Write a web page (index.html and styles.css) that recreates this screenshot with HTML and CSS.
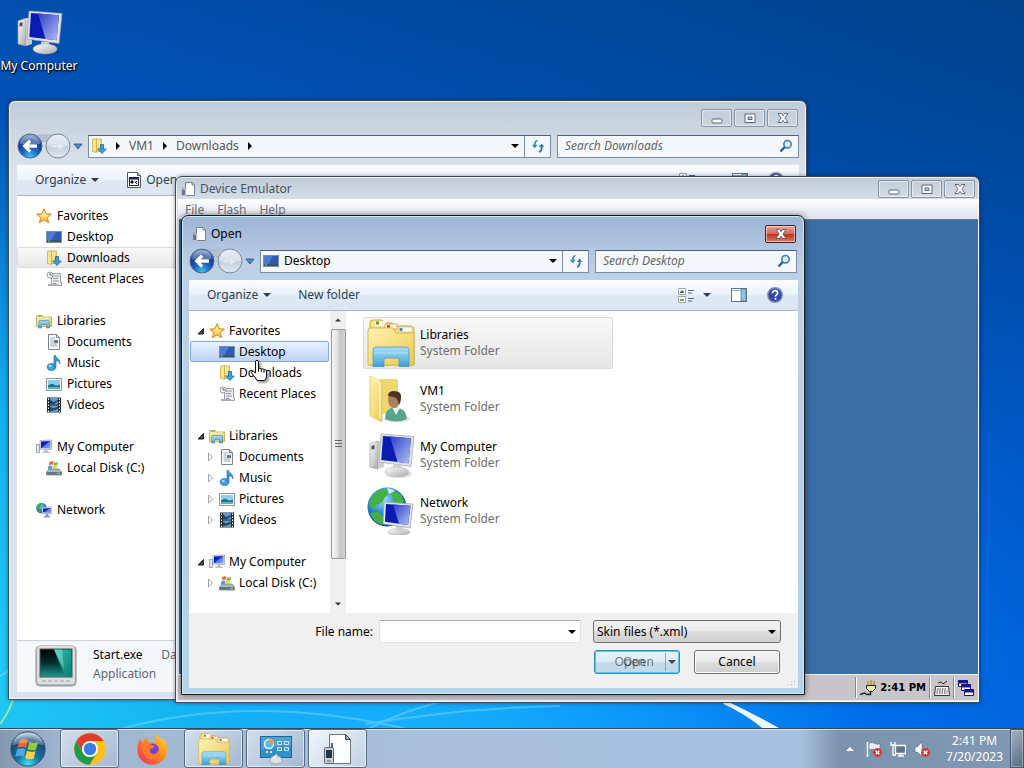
FILE: index.html
```html
<!DOCTYPE html>
<html lang="en">
<head>
    <meta charset="UTF-8">
    <meta name="viewport" content="width=device-width, initial-scale=1.0">
    <title>Desktop</title>
    <link rel="stylesheet" href="styles.css">
</head>
<body>
    <!-- icon sprite -->
    <svg class="sprite" aria-hidden="true">
        <defs>
            <linearGradient id="gScreen" x1="0" y1="0" x2="1" y2="1">
                <stop offset="0" stop-color="#0516a8"/><stop offset=".45" stop-color="#0a24c8"/><stop offset=".5" stop-color="#5a78e4"/><stop offset="1" stop-color="#8aa4f4"/>
            </linearGradient>
            <linearGradient id="gPanel" x1="0" y1="0" x2="1" y2="1">
                <stop offset="0" stop-color="#2a3fc8"/><stop offset="1" stop-color="#b4bff4"/>
            </linearGradient>
            <linearGradient id="gFolder" x1="0" y1="0" x2="1" y2="1">
                <stop offset="0" stop-color="#fdf3b4"/><stop offset="1" stop-color="#ecca50"/>
            </linearGradient>
            <linearGradient id="gGlass" x1="0" y1="0" x2="0" y2="1">
                <stop offset="0" stop-color="#a9ddf3"/><stop offset=".6" stop-color="#6dbbe2"/><stop offset="1" stop-color="#3a9ad4"/>
            </linearGradient>
            <linearGradient id="gGrey" x1="0" y1="0" x2="1" y2="1">
                <stop offset="0" stop-color="#ffffff"/><stop offset="1" stop-color="#a9a9ad"/>
            </linearGradient>
            <linearGradient id="gTeal" x1="0" y1="0" x2="0" y2="1">
                <stop offset="0" stop-color="#000"/><stop offset=".5" stop-color="#04302f"/><stop offset="1" stop-color="#1c9a90"/>
            </linearGradient>
            <linearGradient id="gBeam" x1="0" y1="0" x2="1" y2="1">
                <stop offset="0" stop-color="#2cc4a8"/><stop offset="1" stop-color="#0c7a78"/>
            </linearGradient>
            <radialGradient id="gStar" cx=".5" cy=".4" r=".6">
                <stop offset="0" stop-color="#fff3a0"/><stop offset="1" stop-color="#f9a51e"/>
            </radialGradient>
            <radialGradient id="gBack" cx=".5" cy=".95" r=".9">
                <stop offset="0" stop-color="#3fc4f4"/><stop offset=".4" stop-color="#1b62c0"/><stop offset=".75" stop-color="#143a8e"/><stop offset="1" stop-color="#8aa4d4"/>
            </radialGradient>
            <linearGradient id="gFwd" x1="0" y1="0" x2="0" y2="1">
                <stop offset="0" stop-color="#e9eef5"/><stop offset=".48" stop-color="#d9e1eb"/><stop offset=".52" stop-color="#c2cedb"/><stop offset="1" stop-color="#e3eaf2"/>
            </linearGradient>
            <radialGradient id="gGlobe" cx=".4" cy=".3" r=".7">
                <stop offset="0" stop-color="#a4e0f8"/><stop offset=".5" stop-color="#2f8cd0"/><stop offset="1" stop-color="#0b3f8c"/>
            </radialGradient>
            <radialGradient id="gOrb" cx=".5" cy=".95" r=".9">
                <stop offset="0" stop-color="#44e0f4"/><stop offset=".4" stop-color="#14719e"/><stop offset=".8" stop-color="#1d4a74"/><stop offset="1" stop-color="#a8c4d8"/>
            </radialGradient>
            <linearGradient id="gFox" x1="1" y1="0" x2="0" y2="1">
                <stop offset="0" stop-color="#ffe13a"/><stop offset=".45" stop-color="#ff8a1c"/><stop offset="1" stop-color="#f5265c"/>
            </linearGradient>
        </defs>

        <symbol id="star" viewBox="0 0 16 16">
            <path d="M8 .8l2.1 4.9 5.3.4-4 3.5 1.2 5.2L8 12l-4.6 2.8 1.2-5.2-4-3.5 5.3-.4z" fill="url(#gStar)" stroke="#e07f10" stroke-width=".9"/>
        </symbol>
        <symbol id="desk" viewBox="0 0 16 16">
            <rect x=".5" y="2.500" width="15" height="11" fill="#2f59b5" stroke="#7390a8"/>
            <path d="M1 3h9L5 12H1z" fill="#4b7bd4"/>
            <rect x="1" y="11" width="14" height="2" fill="#3b5468"/><path d="M2 12h2" stroke="#8fd06a"/>
        </symbol>
        <symbol id="down" viewBox="0 0 16 16">
            <path d="M1.500 1.500l4-1v14l-4-1z" fill="#f9e590" stroke="#c7a13c" stroke-width=".7"/>
            <path d="M5.500 1h5v12.500h-5z" fill="url(#gFolder)" stroke="#c7a13c" stroke-width=".7"/>
            <path d="M9.500 6.500h3V11h2.800L11 15.500 6.700 11h2.800z" fill="#3ba0dc" stroke="#1c6ba8" stroke-width=".8"/>
        </symbol>
        <symbol id="recent" viewBox="0 0 16 16">
            <path d="M5.500 2.500h9v9h1v3h-10z" fill="#efefef" stroke="#9ba1a6"/>
            <path d="M7 5h6M7 7.500h5M7 10h6M7 12.500h3" stroke="#8e959b"/>
            <circle cx="4" cy="4" r="3" fill="#f4f6f8" stroke="#9ba1a6"/><path d="M4 2v2h2" fill="none" stroke="#667"/>
            <path d="M2 14h10" stroke="#a5abb0" stroke-width="2"/>
        </symbol>
        <symbol id="libs" viewBox="0 0 16 16">
            <path d="M.5 2.500h6l1 1.500h8v9.500H.5z" fill="url(#gFolder)" stroke="#b9a558" stroke-width=".8"/>
            <path d="M2 3.200h4" stroke="#6aaa58"/><path d="M9 5h4" stroke="#fff"/>
            <path d="M2.500 15V9q0-1.500 1.500-1.500h8q1.500 0 1.500 1.500v6h-3v-3.500h-5V15z" fill="url(#gGlass)" stroke="#4a90ba" stroke-width=".7"/>
        </symbol>
        <symbol id="doc" viewBox="0 0 16 16">
            <path d="M2.500.5h8l3 3v12h-11z" fill="#fdfdfd" stroke="#7c868e"/>
            <path d="M10.500.5v3h3" fill="none" stroke="#7c868e"/>
            <path d="M4.500 4h4M4.500 6h3M4.500 8h3M4.500 10h7M4.500 12h7" stroke="#9aa7b2"/><rect x="8" y="6" width="4" height="3" fill="#62788c"/>
        </symbol>
        <symbol id="music" viewBox="0 0 16 16">
            <ellipse cx="5.500" cy="12" rx="4.300" ry="3.500" fill="#3fa2dc" stroke="#226ea8" stroke-width=".7"/>
            <path d="M8 12V.5h1.500c.3 2.500 5.500 3.500 4.300 8.500-.3-2.500-2-3-3.800-3.300V12z" fill="#3993d0" stroke="#226ea8" stroke-width=".6"/>
            <ellipse cx="4.300" cy="11" rx="1.500" ry="1" fill="#a9e0f9"/>
        </symbol>
        <symbol id="pics" viewBox="0 0 16 16">
            <rect x=".5" y="2.500" width="15" height="12" fill="#fff" stroke="#8997a3"/>
            <rect x="2" y="4" width="12" height="9" fill="#8cd0ee"/>
            <path d="M2 9.500q4-3 6-1t6 0V13H2z" fill="#28707c"/><path d="M2 11h12v2H2z" fill="#4fb6c8"/>
        </symbol>
        <symbol id="video" viewBox="0 0 16 16">
            <rect x="1" y=".5" width="14" height="15" fill="#232b33"/>
            <rect x="4" y="1" width="8" height="6.500" fill="#5b9ed2"/><rect x="4" y="8.500" width="8" height="6.500" fill="#5b9ed2"/>
            <path d="M4 2l3 3 5-2v1.500L8 7H4zM4 9.500l3 2 5-2v2l-4 2-4 .5z" fill="#254560"/>
            <path d="M2.500 1.500v14M13.500 1.500v14" stroke="#fff" stroke-dasharray="1.500 1.500"/>
        </symbol>
        <symbol id="pc" viewBox="0 0 16 16">
            <path d="M.5 5.500h3v8h-3z" fill="#e4e6e8" stroke="#8a8f96" stroke-width=".8"/>
            <path d="M4 1.500l11.500-.5v9.500L4 10z" fill="#eceff2" stroke="#8b94a4" stroke-width=".7"/>
            <path d="M5 2.500l9.500-.5v7.500L5 9z" fill="url(#gScreen)"/>
            <path d="M8.500 10.500h3v2h2v1.500h-7v-1.500h2z" fill="#b9bfc8"/>
        </symbol>
        <symbol id="disk" viewBox="0 0 16 16">
            <path d="M3 9h10l2.500 3v3H.5v-3z" fill="#a9b8c0" stroke="#65737c" stroke-width=".7"/>
            <path d="M.8 12h14.400v2.800H.8z" fill="#5b7884"/><rect x="11" y="12.800" width="3" height="1" fill="#8fe46a"/>
            <path d="M3.500 2q2-1.500 4 0L6.700 5q-2-1-4 .2z" fill="#ea6333"/><path d="M8.200 2.200q2 1 4-.3L11.500 5q-2 1.300-4 .2z" fill="#80b936"/>
            <path d="M2.500 6q2-1.200 4 0L5.800 9H1.800z" fill="#4c9bd8"/><path d="M7.200 6q2 1 4-.3L10.500 9H6.500z" fill="#f4c73a"/>
        </symbol>
        <symbol id="net" viewBox="0 0 16 16">
            <circle cx="5.500" cy="6" r="5.300" fill="url(#gGlobe)"/>
            <path d="M1.500 3q3-3 5-1.500L5 5 2 7zM1.500 8l3 0v3z" fill="#43b045"/>
            <path d="M6 5.500l9.800-.8v7L6 11.500z" fill="#e8eaf2" stroke="#8b94b4" stroke-width=".6"/><path d="M7 6.500l7.800-.6v5L7 10.600z" fill="url(#gScreen)"/>
            <path d="M9.500 12h3v2h1.500v1.500H8V14h1.500z" fill="#8e9acd"/>
        </symbol>
        <symbol id="skin" viewBox="0 0 16 16">
            <path d="M5.500 1.500h7l2 2v11h-9z" fill="#fcfdff" stroke="#77828e"/><path d="M12 1.500V4h2.500" fill="#cfd8e2" stroke="#77828e"/>
            <path d="M1.500 8.500h4v6h-4z" fill="#687888" stroke="#b9c2cc"/><path d="M3 6v3" stroke="#8893a0"/>
        </symbol>
        <symbol id="exe" viewBox="0 0 16 16">
            <path d="M1.500.5h10l3 3v12h-13z" fill="#fff" stroke="#555"/><path d="M11.500.5v3h3" fill="#ccc" stroke="#555"/>
            <rect x="3.500" y="5.500" width="9" height="8" fill="#fff" stroke="#222"/><path d="M3 6.500h10" stroke="#15157c" stroke-width="2"/>
            <path d="M5 9h2v2H5zM9 11l2-2M9 9.500l2 2.500" stroke="#111"/>
        </symbol>
        <symbol id="views" viewBox="0 0 16 16">
            <path d="M.5 1.500h7v6h-7zM.5 9.500h7v6h-7z" fill="#fff" stroke="#9aa5ae"/><path d="M2 5l2-2 2 2v1H2z" fill="#496274"/><path d="M2 12h4v2H2z" fill="#89a832"/>
            <path d="M10 3.500h6M10 6h4M10 11.500h6M10 14h4" stroke="#54697c"/>
        </symbol>
        <symbol id="pane" viewBox="0 0 16 16">
            <rect x=".5" y="1.500" width="15" height="13" fill="#fff" stroke="#607388"/><path d="M1 3.500h14" stroke="#7fb2d8"/><path d="M10 2h5v12h-5z" fill="#8cc4e8" stroke="#607388" stroke-width=".7"/>
        </symbol>
        <symbol id="help" viewBox="0 0 16 16">
            <circle cx="8" cy="8" r="7.300" fill="#2f49ac" stroke="#8993ad" stroke-width="1.400"/>
            <path d="M5.500 6.200q0-2.500 2.700-2.500 2.500 0 2.500 2.200c0 1.700-2.200 1.700-2.200 3.600M8.500 10.800v2" fill="none" stroke="#fff" stroke-width="1.700"/>
        </symbol>
        <symbol id="mag" viewBox="0 0 14 14">
            <circle cx="8.500" cy="5.200" r="3.700" fill="#d5effa" stroke="#3f7fae" stroke-width="1.600"/><path d="M5.800 8L1.500 12.500" stroke="#32557a" stroke-width="2.200"/>
        </symbol>
        <symbol id="refresh" viewBox="0 0 14 14">
            <path d="M6.500 1.500Q3.500 2 3.800 7" fill="none" stroke="#3d86c6" stroke-width="1.700"/><path d="M.7 5.800h6L3.700 9.300z" fill="#3d86c6"/>
            <path d="M8 13q3-.7 2.700-5.500" fill="none" stroke="#2f67a6" stroke-width="1.700"/><path d="M7.600 8h6l-3-3.500z" fill="#3a8c9a"/>
        </symbol>
        <symbol id="caret" viewBox="0 0 8 4"><path d="M0 0h8L4 4z" fill="currentColor"/></symbol>
        <symbol id="right" viewBox="0 0 4 8"><path d="M0 0v8l4-4z" fill="currentColor"/></symbol>
        <symbol id="open" viewBox="0 0 8 8"><path d="M1 7L6.500 1.500V7z" fill="#444" stroke="#222"/></symbol>
        <symbol id="closed" viewBox="0 0 8 10"><path d="M1.500 1v8l4-4z" fill="#fff" stroke="#a3a3a3"/></symbol>
        <symbol id="min" viewBox="0 0 12 12"><rect x="1" y="7" width="10" height="4" rx="1" fill="#fff" stroke="#5a6675"/></symbol>
        <symbol id="max" viewBox="0 0 12 12"><path d="M1 2h10v8.500H1zM4 5h4v2.500H4z" fill="#fff" fill-rule="evenodd" stroke="#5a6675"/></symbol>
        <symbol id="close" viewBox="0 0 12 12">
            <path d="M1 1.500h3.300L6 3.700l1.700-2.200H11L7.900 6l3.100 4.500H7.700L6 8.300l-1.700 2.200H1L4.100 6z" fill="#fff" stroke="#5a5a6a" stroke-width=".9"/>
        </symbol>
        <symbol id="nav" viewBox="0 0 66 26">
            <path d="M13 2h28v5q-14 3-28 0z" fill="#b5c2d1" stroke="#98a7b9" stroke-width=".6"/>
            <circle cx="13" cy="13" r="12" fill="url(#gBack)" stroke="#4f688a"/>
            <path d="M3 11Q5 3 13 3t10 8q-10 2-20 0z" fill="#fff" opacity=".3"/>
            <path d="M5.500 13l6.500-6.500 2.300 2.200-2.700 2.700H20v3.400h-8.400l2.700 2.700L12 19.700z" fill="#fff"/>
            <circle cx="41" cy="13" r="12" fill="url(#gFwd)" stroke="#77889c"/>
            <path d="M34 11.500h7V8.500l7 4.500-7 4.500v-3h-7z" fill="#e3e9f0" stroke="#d0d9e3" stroke-width=".7"/>
            <path d="M57 11h8l-4 5z" fill="#4a8fcc" stroke="#2a4a74" stroke-width=".8"/>
        </symbol>

        <symbol id="bigpc" viewBox="0 0 48 48">
            <ellipse cx="32" cy="43" rx="13" ry="4" fill="#000" opacity=".12"/>
            <path d="M3 13l8-3v28l-8-2z" fill="url(#gGrey)" stroke="#9a9ca0" stroke-width=".7"/><path d="M4.500 15l3-1v4l-3 .5z" fill="#4d4f55"/>
            <path d="M11 10h6v26l-6 2z" fill="#ccced2"/>
            <path d="M26 34h8l1 6h-9z" fill="#d1d3d7"/><ellipse cx="30" cy="41" rx="12" ry="5" fill="url(#gGrey)" stroke="#b4b6ba" stroke-width=".6"/>
            <path d="M14 3l33 2.500-3 30L12 31z" fill="#dfe2e8" stroke="#a0a4ac" stroke-width=".7"/>
            <path d="M16 5l28 2.300-2.500 25L14.300 29z" fill="#0a1cb0"/><path d="M23 5.600l21 1.700-2.500 25-11-1.400z" fill="url(#gPanel)"/>
        </symbol>
        <symbol id="biglibs" viewBox="0 0 48 48">
            <path d="M3 46V4q0-3 3-3h9l3 3h7l2 3h16q4 0 4 4v35z" fill="#f7e184" stroke="#cfa33c"/>
            <path d="M8 2h11v5H8z" fill="#fff8dd"/><path d="M9 2.500h3v3H9z" fill="#569a3e"/><path d="M18 5h12v5H18z" fill="#fff8dd" stroke="#e4823b" stroke-width=".7"/><path d="M20 6h3v3h-3z" fill="#d84a2b"/>
            <path d="M1 12q0-3 3-3h22l3 5h18v32H1z" fill="url(#gFolder)" stroke="#d7b54c"/>
            <path d="M31 8h14v5H31z" fill="#fff" stroke="#c7ba80" stroke-width=".7"/><path d="M32.500 9h3v3h-3z" fill="#4a84b4"/>
            <path d="M6 48V31q0-3 3-3h30q3 0 3 3v17H32v-9H17v9z" fill="url(#gGlass)" stroke="#4c9bcc" stroke-width=".8"/><path d="M7 34h34" stroke="#d5f1fc" opacity=".6"/>
        </symbol>
        <symbol id="bigvm" viewBox="0 0 48 48">
            <path d="M13 4h18v35H13z" fill="#f0d870"/><path d="M3 1l10 5q2 2 2 5v36L5 42q-2-1-2-4z" fill="url(#gFolder)" stroke="#dfc05a" stroke-width=".8"/>
            <path d="M4 2l9 6v35" fill="none" stroke="#fdf6c8" stroke-width="1.500"/>
            <ellipse cx="30" cy="44" rx="13" ry="3" fill="#000" opacity=".12"/>
            <path d="M18 44q0-11 10-12 11 1 12 12-11 5-22 0z" fill="#57a58a"/><path d="M25 32l4 8 4-7z" fill="#e8f4ee"/>
            <ellipse cx="27" cy="25" rx="6" ry="8" fill="#a9825c"/><path d="M21 21q0-5 6-5 8 0 7 7 0 4-2 7-1-7-5-8z" fill="#4b3322"/>
        </symbol>
        <symbol id="bignet" viewBox="0 0 48 48">
            <circle cx="20" cy="20" r="19.500" fill="url(#gGlobe)"/>
            <path d="M2 18Q5 4 17 2l6 4-5 4-3 6-6 2-2 5zM24 3l10 4 3 8-7 4-4-6zM3 26l8-1 6 5-2 8q-9-3-12-12z" fill="#45b144"/>
            <path d="M20 1q6 1 8 3l-6 3z" fill="#e9fbff" opacity=".8"/>
            <ellipse cx="32" cy="45" rx="11" ry="3.500" fill="url(#gGrey)" stroke="#b4b6ba" stroke-width=".6"/><path d="M29 38h7v6h-7z" fill="#cfd1d6"/>
            <path d="M17 15l29 2-3 24-27-4z" fill="#dfe2e8" stroke="#9a9fac" stroke-width=".7"/><path d="M19 17l24.500 1.800L41 38l-23-3.200z" fill="#0a1cb0"/><path d="M26 17.500l17.500 1.300L41 38l-9-1.200z" fill="url(#gPanel)"/>
        </symbol>
        <symbol id="start-exe" viewBox="0 0 42 42">
            <rect x="1" y="1" width="40" height="40" rx="4" fill="#b4b6b8" stroke="#8d9092"/><rect x="2" y="1" width="38" height="38" rx="3" fill="#dddedf"/>
            <rect x="5" y="4" width="32" height="28" fill="url(#gTeal)" stroke="#555"/><path d="M19 4.500h17.500v27H32l-5-7z" fill="url(#gBeam)"/><path d="M19 4.500h8l2 19z" fill="#8ae8d4" opacity=".5"/>
            <path d="M7 36h28" stroke="#bfc1c3" stroke-width="2" stroke-dasharray="4 2"/>
        </symbol>

        <symbol id="orb" viewBox="0 0 40 40">
            <circle cx="20" cy="20" r="18" fill="url(#gOrb)" stroke="#2b4c6b"/>
            <path d="M11 11q5-3 9 0l-2 8q-4-2.500-9 0z" fill="#f0662c"/><path d="M21.500 12q4 3 9 .5l-2 8q-5 2-9-.5z" fill="#94c83d"/>
            <path d="M8.500 20.500q5-2.500 9 0l-2 8q-4-2.500-9-.2z" fill="#4fa8e4"/><path d="M19 21.500q4 2.500 9 .5l-2 8q-5 2-9-.5z" fill="#fbd04a"/>
            <path d="M4 16Q6 3 20 3t16 13q-16-6-32 0z" fill="#fff" opacity=".28"/>
        </symbol>
        <symbol id="chrome" viewBox="0 0 32 32">
            <circle cx="16" cy="16" r="15.800" fill="#fbc116"/>
            <path d="M2.300 8.100A15.800 15.800 0 0 1 29.700 8.100H16A8 8 0 0 0 9 20z" fill="#e33b2e"/>
            <path d="M2.300 8.100A15.800 15.800 0 0 0 15.500 31.800L22.900 20A8 8 0 0 1 9 20z" fill="#229a4b"/>
            <circle cx="16" cy="16" r="8" fill="#fff"/><circle cx="16" cy="16" r="6.200" fill="#3a7be8"/>
        </symbol>
        <symbol id="firefox" viewBox="0 0 32 32">
            <path d="M4 6l3 4q1-4 4-5 0 3 3 4l5 0q-1-5 3-9 0 4 4 7l2-1q3 4 3 10A14.700 14.700 0 0 1 1.500 18Q1 11 4 6z" fill="url(#gFox)"/>
            <circle cx="16.500" cy="17" r="6.500" fill="#7344cf"/><path d="M5 11q6-3 10 1l4 1q-2 3-5 3-1 4 3 5 5 0 6-6 2 9-6 11-10 0-12-15z" fill="#ff7a2a"/>
        </symbol>
        <symbol id="cpanel" viewBox="0 0 32 32">
            <rect x=".5" y="3.500" width="31" height="21" fill="#2e8fca" stroke="#1e6593"/><path d="M1 4h30v9Q16 12 1 17z" fill="#fff" opacity=".16"/>
            <circle cx="9" cy="11" r="4.500" fill="#5fb6e0" stroke="#e6f6fd" stroke-width="1.500"/><path d="M9 11V6a5 5 0 0 1 5 5z" fill="#f69b2e"/>
            <path d="M17.500 8.500h4v3h-4zM24.500 8.500h4v3h-4zM17.500 14.500h4v3h-4zM24.500 14.500h4v3h-4z" fill="#3d9ed4" stroke="#cfeafa"/><path d="M6 19h2M10 19h2" stroke="#fae26b" stroke-width="2"/>
            <ellipse cx="16" cy="27" rx="6" ry="4" fill="#dfe2e5" stroke="#9fa6ac"/><path d="M13 25l4-3" stroke="#f7f7f7" stroke-width="2"/>
        </symbol>
        <symbol id="device" viewBox="0 0 32 32">
            <path d="M7.500 1.500h16l5 5v24h-21z" fill="#fcfdff" stroke="#6c7681"/><path d="M23.500 1.500v5h5z" fill="#9aa6b2" stroke="#404a54"/>
            <path d="M10 10v6" stroke="#5a646e" stroke-width="2"/><rect x="2.500" y="14.500" width="9" height="16" rx="1" fill="#c9d0d8" stroke="#59646f"/><rect x="4" y="17" width="6" height="8" fill="#263444"/><path d="M5 28h4" stroke="#59646f"/>
        </symbol>

        <symbol id="flag" viewBox="0 0 16 16">
            <path d="M1.500 1v15" stroke="#fff" stroke-width="1.600"/><path d="M3 2q4-1 6 .5t5 0v7q-3 1-5-.5T3 9z" fill="#e8eef5" stroke="#54657a" stroke-width=".6"/>
            <circle cx="11.500" cy="11.500" r="4.400" fill="#d8352b"/><path d="M9.700 9.700l3.600 3.600m0-3.600l-3.600 3.600" stroke="#fff" stroke-width="1.500"/>
        </symbol>
        <symbol id="lan" viewBox="0 0 16 16">
            <path d="M5.500 4.500h10v8h-10z" fill="#5f7488" stroke="#fff" stroke-width="1.300"/><path d="M8 15h6M10.500 13v2" stroke="#fff" stroke-width="1.500"/>
            <path d="M1 1v3h4V1M3 4v10h3" fill="none" stroke="#fff" stroke-width="1.300"/>
        </symbol>
        <symbol id="sound" viewBox="0 0 16 16">
            <path d="M1 6h2l5-5v14l-5-4H1z" fill="#fff" stroke="#54657a" stroke-width=".6"/>
            <circle cx="11.500" cy="11.500" r="4.400" fill="#d8352b"/><path d="M9.700 9.700l3.600 3.600m0-3.600l-3.600 3.600" stroke="#fff" stroke-width="1.500"/>
        </symbol>
        <symbol id="plug" viewBox="0 0 16 16">
            <path d="M8 1v4M11 0v5M14 1v4" stroke="#a3a022" stroke-width="1.400"/><path d="M6.500 5.500h9v3l-3 3h-3l-3-3z" fill="#e9e6b0" stroke="#222"/>
            <path d="M10.500 11.500v3H7L4.500 13 0 14.500" fill="none" stroke="#222" stroke-width="1.400"/>
        </symbol>
        <symbol id="keys" viewBox="0 0 16 16">
            <path d="M4 3l3-1 2 2 4-3" fill="none" stroke="#222"/><path d="M1.500 6.500h13l1 9H.5z" fill="#f7f7f7" stroke="#333"/>
            <path d="M3 9h10M2.500 11h11M2.500 13h11" stroke="#333" stroke-dasharray="1.500 1"/>
        </symbol>
        <symbol id="wins" viewBox="0 0 16 16">
            <path d="M.5.5h9v6h-9zM3.500 4.500h9v6h-9zM6.500 9.500h9v6h-9z" fill="#fff" stroke="#16166e"/><path d="M0 2h10M3 6h10M6 11h10" stroke="#16168c" stroke-width="3"/>
        </symbol>
        <symbol id="hand" viewBox="0 0 18 24">
            <path d="M5.500 2q1.500-1.500 3 0v7.500q1.500-1 2.800.4 1.700-.8 2.700.8 2-.5 2.500 1.300v5q0 2.500-2 4.500H7q-1-3-5.500-7.500 0-2 2-1.700l2 1.700z" fill="#fff" stroke="#111"/>
            <path d="M8.500 9v4M11.300 10v3M14 11v3" stroke="#111"/>
        </symbol>
    </svg>

    <main class="desktop">
        <svg class="wallpaper" viewBox="0 0 1024 768" preserveAspectRatio="none" aria-hidden="true">
            <path d="M0 724Q8 714 13 700" fill="none" stroke="#b8f08a" stroke-width="2" opacity=".8"/>
            <path d="M0 676Q5 674 9 670M110 732Q250 690 420 732M366 730Q400 712 440 702M366 724Q460 708 560 706" fill="none" stroke="#a8ecff" stroke-width="2" opacity=".35"/>
            <path d="M724 702Q754 716 782 732L770 732Q750 714 724 702z" fill="#eefaff" stroke="#eefaff" stroke-width="4"/>
        </svg>

        <a class="shortcut" href="#">
            <svg><use href="#bigpc"/></svg>
            <span>My Computer</span>
        </a>

        <!-- Downloads window -->
        <section class="window explorer">
            <div class="controls">
                <button aria-label="Minimize"><svg><use href="#min"/></svg></button>
                <button aria-label="Maximize"><svg><use href="#max"/></svg></button>
                <button aria-label="Close"><svg><use href="#close"/></svg></button>
            </div>
            <div class="navbar">
                <button class="history" aria-label="Back"><svg><use href="#nav"/></svg></button>
                <div class="address">
                    <svg class="i16"><use href="#down"/></svg>
                    <svg class="sep"><use href="#right"/></svg><span>VM1</span>
                    <svg class="sep"><use href="#right"/></svg><span>Downloads</span>
                    <svg class="sep"><use href="#right"/></svg>
                    <svg class="caret push"><use href="#caret"/></svg>
                    <button class="refresh" aria-label="Refresh"><svg><use href="#refresh"/></svg></button>
                </div>
                <div class="search">
                    <input type="text" placeholder="Search Downloads" aria-label="Search Downloads">
                    <svg><use href="#mag"/></svg>
                </div>
            </div>
            <div class="toolbar">
                <button>Organize <svg class="caret"><use href="#caret"/></svg></button>
                <button class="with-icon"><svg class="i16"><use href="#exe"/></svg>Open</button>
                <div class="tools">
                    <button aria-label="Views"><svg class="i16"><use href="#views"/></svg><svg class="caret"><use href="#caret"/></svg></button>
                    <button aria-label="Preview pane"><svg class="i16"><use href="#pane"/></svg></button>
                    <button aria-label="Help"><svg class="i16"><use href="#help"/></svg></button>
                </div>
            </div>
            <nav class="tree">
                <a class="root" href="#"><svg class="i16"><use href="#star"/></svg>Favorites</a>
                <a href="#"><svg class="i16"><use href="#desk"/></svg>Desktop</a>
                <a class="current" href="#"><svg class="i16"><use href="#down"/></svg>Downloads</a>
                <a href="#"><svg class="i16"><use href="#recent"/></svg>Recent Places</a>
                <a class="root" href="#"><svg class="i16"><use href="#libs"/></svg>Libraries</a>
                <a href="#"><svg class="i16"><use href="#doc"/></svg>Documents</a>
                <a href="#"><svg class="i16"><use href="#music"/></svg>Music</a>
                <a href="#"><svg class="i16"><use href="#pics"/></svg>Pictures</a>
                <a href="#"><svg class="i16"><use href="#video"/></svg>Videos</a>
                <a class="root" href="#"><svg class="i16"><use href="#pc"/></svg>My Computer</a>
                <a href="#"><svg class="i16"><use href="#disk"/></svg>Local Disk (C:)</a>
                <a class="root" href="#"><svg class="i16"><use href="#net"/></svg>Network</a>
            </nav>
            <footer class="details">
                <svg><use href="#start-exe"/></svg>
                <div><p>Start.exe</p><p class="muted">Application</p></div>
                <p class="muted">Date modified:</p>
            </footer>
        </section>

        <!-- Device Emulator window -->
        <section class="window emulator">
            <header class="titlebar">
                <svg class="i16"><use href="#skin"/></svg>
                <h1>Device Emulator</h1>
                <div class="controls">
                    <button aria-label="Minimize"><svg><use href="#min"/></svg></button>
                    <button aria-label="Maximize"><svg><use href="#max"/></svg></button>
                    <button aria-label="Close"><svg><use href="#close"/></svg></button>
                </div>
            </header>
            <div class="menu">
                <button>File</button>
                <button>Flash</button>
                <button>Help</button>
            </div>
            <div class="screen"></div>
            <footer class="ce-bar">
                <div><svg class="i16"><use href="#plug"/></svg><time>2:41 PM</time></div>
                <div><svg class="i16"><use href="#keys"/></svg></div>
                <div><svg class="i16"><use href="#wins"/></svg></div>
            </footer>
        </section>

        <!-- Open dialog -->
        <section class="window dialog" role="dialog" aria-labelledby="dialogTitle">
            <header class="titlebar">
                <svg class="i16"><use href="#skin"/></svg>
                <h1 id="dialogTitle">Open</h1>
                <div class="controls">
                    <button class="red" aria-label="Close"><svg><use href="#close"/></svg></button>
                </div>
            </header>
            <div class="navbar">
                <button class="history" aria-label="Back"><svg><use href="#nav"/></svg></button>
                <div class="address">
                    <svg class="i16"><use href="#desk"/></svg>
                    <span>Desktop</span>
                    <svg class="caret push"><use href="#caret"/></svg>
                    <button class="refresh" aria-label="Refresh"><svg><use href="#refresh"/></svg></button>
                </div>
                <div class="search">
                    <input type="text" placeholder="Search Desktop" aria-label="Search Desktop">
                    <svg><use href="#mag"/></svg>
                </div>
            </div>
            <div class="toolbar">
                <button>Organize <svg class="caret"><use href="#caret"/></svg></button>
                <button>New folder</button>
                <div class="tools">
                    <button aria-label="Views"><svg class="i16"><use href="#views"/></svg><svg class="caret"><use href="#caret"/></svg></button>
                    <button aria-label="Preview pane"><svg class="i16"><use href="#pane"/></svg></button>
                    <button aria-label="Help"><svg class="i16"><use href="#help"/></svg></button>
                </div>
            </div>
            <div class="browse">
                <nav class="tree">
                    <a class="root" href="#"><svg class="arrow"><use href="#open"/></svg><svg class="i16"><use href="#star"/></svg>Favorites</a>
                    <a class="picked" href="#"><svg class="arrow"></svg><svg class="i16"><use href="#desk"/></svg>Desktop</a>
                    <a href="#"><svg class="arrow"></svg><svg class="i16"><use href="#down"/></svg>Downloads</a>
                    <a href="#"><svg class="arrow"></svg><svg class="i16"><use href="#recent"/></svg>Recent Places</a>
                    <a class="root" href="#"><svg class="arrow"><use href="#open"/></svg><svg class="i16"><use href="#libs"/></svg>Libraries</a>
                    <a href="#"><svg class="arrow"><use href="#closed"/></svg><svg class="i16"><use href="#doc"/></svg>Documents</a>
                    <a href="#"><svg class="arrow"><use href="#closed"/></svg><svg class="i16"><use href="#music"/></svg>Music</a>
                    <a href="#"><svg class="arrow"><use href="#closed"/></svg><svg class="i16"><use href="#pics"/></svg>Pictures</a>
                    <a href="#"><svg class="arrow"><use href="#closed"/></svg><svg class="i16"><use href="#video"/></svg>Videos</a>
                    <a class="root" href="#"><svg class="arrow"><use href="#open"/></svg><svg class="i16"><use href="#pc"/></svg>My Computer</a>
                    <a href="#"><svg class="arrow"><use href="#closed"/></svg><svg class="i16"><use href="#disk"/></svg>Local Disk (C:)</a>
                </nav>
                <div class="scrollbar">
                    <svg class="up"><use href="#caret"/></svg>
                    <div class="thumb"><i></i></div>
                    <svg><use href="#caret"/></svg>
                </div>
                <div class="files">
                    <a class="hover" href="#"><svg><use href="#biglibs"/></svg><span>Libraries<small>System Folder</small></span></a>
                    <a href="#"><svg><use href="#bigvm"/></svg><span>VM1<small>System Folder</small></span></a>
                    <a href="#"><svg><use href="#bigpc"/></svg><span>My Computer<small>System Folder</small></span></a>
                    <a href="#"><svg><use href="#bignet"/></svg><span>Network<small>System Folder</small></span></a>
                </div>
            </div>
            <form class="choose">
                <label for="fileName">File name:</label>
                <div class="combo">
                    <input type="text" id="fileName">
                    <svg class="caret"><use href="#caret"/></svg>
                </div>
                <div class="combo">
                    <select aria-label="File type"><option>Skin files (*.xml)</option></select>
                    <svg class="caret"><use href="#caret"/></svg>
                </div>
                <div class="actions">
                    <div class="split">
                        <button type="button">Open<span class="fade" aria-hidden="true">Open</span></button>
                        <button type="button" aria-label="Open options"><svg class="caret"><use href="#caret"/></svg></button>
                    </div>
                    <button type="button">Cancel</button>
                </div>
            </form>
            <i class="grip"></i>
        </section>

        <svg class="cursor" aria-hidden="true"><use href="#hand"/></svg>

        <footer class="taskbar">
            <button class="start" aria-label="Start"><svg><use href="#orb"/></svg></button>
            <button class="task running" aria-label="Chrome"><svg><use href="#chrome"/></svg></button>
            <button class="task" aria-label="Firefox"><svg><use href="#firefox"/></svg></button>
            <button class="task running" aria-label="Explorer"><svg><use href="#biglibs"/></svg></button>
            <button class="task running" aria-label="Control Panel"><svg><use href="#cpanel"/></svg></button>
            <button class="task running active" aria-label="Device Emulator"><svg><use href="#device"/></svg></button>
            <div class="tray">
                <svg class="caret up"><use href="#caret"/></svg>
                <svg class="i16"><use href="#flag"/></svg>
                <svg class="i16"><use href="#lan"/></svg>
                <svg class="i16"><use href="#sound"/></svg>
                <time>2:41 PM<br>7/20/2023</time>
            </div>
            <button class="peek" aria-label="Show desktop"></button>
        </footer>
    </main>
</body>
</html>
```

FILE: styles.css
```css
* {
    margin: 0;
    padding: 0;
    box-sizing: border-box;
}
body {
    font-family: "Noto Sans", "Open Sans", sans-serif;
    font-size: 12px;
    line-height: 16px;
    color: #000;
    overflow: hidden;
}
button, input, select {
    font: inherit;
    color: inherit;
    background: none;
    border: none;
    outline: none;
}
a {
    color: inherit;
    text-decoration: none;
}
svg {
    display: block;
    flex: none;
}
.sprite {
    position: absolute;
    width: 0;
    height: 0;
}
.i16 {
    width: 16px;
    height: 16px;
}
.caret {
    width: 8px;
    height: 4px;
}
.up { transform: rotate(180deg); }
.push { margin-left: auto; }

.desktop {
    position: relative;
    height: 100vh;
    overflow: hidden;
    background:
        radial-gradient(ellipse 340px 560px at 0% 88%, #20c8f6 0%, rgba(24,190,242,0.85) 45%, rgba(10,110,220,0) 100%),
        radial-gradient(ellipse 760px 700px at 38% 108%, #1cc0fc 0%, #0c98fa 36%, rgba(0,110,236,0.8) 66%, rgba(0,72,170,0) 100%),
        linear-gradient(200deg, #00428c 0%, rgba(0,80,180,0.6) 35%, rgba(0,90,210,0) 70%),
        linear-gradient(#0450ae 0%, #0060d8 60%, #0064dc 100%);
}
.wallpaper {
    position: absolute;
    width: 100%;
    height: 100%;
}
.shortcut {
    position: absolute;
    top: 8px;
    left: 0;
    width: 78px;
    color: #fff;
    text-align: center;
    white-space: nowrap;
    text-shadow: 0 1px 2px #000, 1px 1px 2px #000;
}
.shortcut svg {
    width: 48px;
    height: 48px;
    margin: 0 auto 2px;
}

/* windows */
.window {
    position: absolute;
    display: flex;
    flex-direction: column;
    border: 1px solid #3c4a5a;
    border-radius: 7px 7px 0 0;
    box-shadow: inset 0 0 0 1px rgba(255,255,255,0.7), 0 0 4px rgba(0,0,0,0.4);
    background: linear-gradient(#c0ccda 0, #dbe4ed 70px, #d8e2ee 100%);
}
.explorer {
    top: 100px;
    left: 8px;
    width: 799px;
    height: 600px;
    padding: 8px 7px 7px 8px;
}
.emulator {
    top: 176px;
    left: 175px;
    width: 805px;
    height: 527px;
    padding: 1px 1px 2px 2px;
    background: linear-gradient(#bfcad8 0, #d4dee8 22px, #e4ebf2 100%);
}
.dialog {
    top: 215px;
    left: 181px;
    width: 624px;
    height: 480px;
    padding: 7px 6px 6px 7px;
    border: 1px solid #101820;
    box-shadow: inset 0 0 0 1px #cfe8f6, 0 0 6px rgba(0,0,0,0.5);
    background: linear-gradient(#9db4d6 0, #bdd0e6 50px, #b8cee6 60%, #b4d4ea 100%);
}
.controls {
    display: flex;
    gap: 2px;
    margin-left: auto;
}
.controls button {
    width: 31px;
    height: 18px;
    display: flex;
    align-items: center;
    justify-content: center;
    border: 1px solid #8593a5;
    border-radius: 2px;
    box-shadow: inset 0 0 0 1px rgba(255,255,255,0.5);
}
.controls svg {
    width: 12px;
    height: 12px;
}
.controls .red {
    border-color: #4b1e1e;
    background: linear-gradient(#eaa398 0, #d9685a 48%, #b93422 50%, #dd7a5c 100%);
}
.explorer > .controls { margin-right: 1px; }
.titlebar {
    display: flex;
    align-items: center;
    gap: 4px;
    height: 21px;
    padding: 0 3px 0 2px;
    color: #48525e;
}
.titlebar h1 {
    font-size: 12px;
    font-weight: normal;
}
.dialog .titlebar {
    color: #000;
    padding-right: 2px;
}

.navbar {
    display: flex;
    align-items: center;
    gap: 6px;
    height: 38px;
}
.dialog .navbar {
    height: 36px;
    padding: 0 1px 2px 0;
}
.history, .history svg {
    width: 66px;
    height: 26px;
}
.address, .search {
    display: flex;
    align-items: center;
    height: 23px;
    border: 1px solid #7d8da1;
    border-top-color: #4f6076;
    background: #f4f8fc;
}
.address {
    flex: 1;
    gap: 5px;
    padding-left: 2px;
    margin-left: -1px;
}
.explorer .address {
    gap: 9px;
    color: #555;
}
.explorer .push { margin-right: -4px; }
.explorer .search { width: 242px; }
.sep {
    width: 4px;
    height: 8px;
    color: #000;
}
.address .caret { color: #000; }
.refresh {
    width: 26px;
    height: 21px;
    border-left: 1px solid #7d8da1;
    display: flex;
    align-items: center;
    justify-content: center;
}
.refresh svg, .search svg {
    width: 14px;
    height: 14px;
}
.search {
    width: 202px;
    padding: 0 5px 0 7px;
}
.search input {
    flex: 1;
    min-width: 0;
}
.search input::placeholder {
    color: #666;
    font-style: italic;
}

.toolbar {
    display: flex;
    align-items: center;
    height: 31px;
    padding: 0 15px 0 18px;
    color: #2a3c56;
    border-bottom: 1px solid #a7b8cc;
    background: linear-gradient(#fafdff 0, #eaf2fa 48%, #dfe9f4 50%, #dce6f2 100%);
}
.toolbar button {
    display: flex;
    align-items: center;
    gap: 5px;
    margin-right: 27px;
}
.toolbar .with-icon {
    gap: 4px;
    margin-right: 0;
}
.toolbar .tools {
    display: flex;
    gap: 20px;
    margin-left: auto;
}
.toolbar .tools button {
    gap: 9px;
    margin: 0;
}

/* folder tree */
.tree {
    background: #fff;
    padding-top: 9px;
}
.tree a {
    display: flex;
    align-items: center;
    gap: 5px;
    height: 21px;
    padding-left: 28px;
    border: 1px solid transparent;
    border-radius: 2px;
    white-space: nowrap;
}
.tree .root {
    padding-left: 18px;
    margin-top: 21px;
}
.tree .root:first-child { margin-top: 0; }
.explorer .tree { flex: 1; }
.explorer .tree .current {
    border-color: #dcdcdc;
    background: linear-gradient(#f9f9f9, #e8e8e8);
}
.dialog .tree { width: 141px; }
.dialog .tree a {
    padding-left: 16px;
    gap: 4px;
    margin: 0 1px;
}
.dialog .tree .root {
    padding-left: 6px;
    margin-top: 21px;
}
.dialog .tree .root:first-child { margin-top: 0; }
.dialog .tree .picked {
    border-color: #84a7d8;
    background: linear-gradient(#eaf2fd, #bcd3f5);
}
.arrow {
    width: 8px;
    height: 10px;
}
.details {
    display: flex;
    height: 52px;
    padding: 4px 18px;
    border-top: 1px solid #cbd2de;
    background: linear-gradient(90deg, #f6f8fc, #eef2fb);
}
.details svg {
    width: 42px;
    height: 42px;
    margin-right: 16px;
}
.details p {
    height: 19px;
    line-height: 20px;
}
.details div { margin-right: 5px; }
.muted { color: #5a6678; }

/* emulator */
.menu {
    display: flex;
    gap: 13px;
    height: 20px;
    padding: 2px 7px 0;
    color: #6d6d78;
    background: linear-gradient(#fff, #dde0ee);
}
.screen {
    flex: 1;
    margin-left: 1px;
    border-top: 1px solid #6d7d90;
    background: #3a6ea5;
}
.ce-bar {
    display: flex;
    justify-content: flex-end;
    height: 26px;
    padding: 2px 0;
    border-top: 1px solid #f2f2f2;
    background: #c8c4c8;
}
.ce-bar div {
    display: flex;
    align-items: center;
    gap: 4px;
    padding: 0 4px 0 3px;
    border-left: 1px solid #fff;
    box-shadow: -1px 0 #888;
}
.ce-bar time {
    font: bold 10px "DejaVu Sans", sans-serif;
}

/* open dialog */
.browse {
    display: flex;
    flex: 1;
    background: #fff;
}
.scrollbar {
    display: flex;
    flex-direction: column;
    align-items: center;
    width: 16px;
    padding: 7px 0;
    background: #f0f0f0;
}
.scrollbar svg {
    width: 6px;
    height: 4px;
    color: #333;
}
.thumb {
    display: flex;
    align-items: center;
    justify-content: center;
    width: 15px;
    height: 230px;
    margin: 7px 0 auto;
    border: 1px solid #9a9a9a;
    border-radius: 1px;
    background: linear-gradient(90deg, #f6f6f6 0, #e0e0e2 45%, #c4c5c8 60%, #d2d3d5 100%);
}
.thumb i {
    width: 7px;
    height: 8px;
    background: repeating-linear-gradient(#666 0, #666 1px, transparent 1px, transparent 3px);
}
.files {
    flex: 1;
    padding: 6px 0 0 17px;
}
.files a {
    display: flex;
    align-items: center;
    gap: 5px;
    width: 250px;
    height: 52px;
    margin-bottom: 4px;
    padding-left: 3px;
    border: 1px solid transparent;
    border-radius: 2px;
}
.files .hover {
    border-color: #dadada;
    background: linear-gradient(#f9f9f9, #e6e6e6);
}
.files svg {
    width: 48px;
    height: 48px;
}
.files small {
    display: block;
    font-size: 12px;
    color: #6d6d6d;
}
.choose {
    display: grid;
    grid-template-columns: 1fr 202px 188px;
    column-gap: 12px;
    row-gap: 7px;
    align-content: start;
    height: 75px;
    padding: 7px 17px 0 0;
    background: #f0f0f0;
}
.choose label {
    justify-self: end;
    margin-right: -6px;
    line-height: 23px;
}
.combo {
    position: relative;
    height: 23px;
}
.combo input, .combo select {
    width: 100%;
    height: 23px;
    padding: 0 20px 0 3px;
    appearance: none;
}
.combo input {
    border: 1px solid #e2e3ea;
    border-top-color: #abadb3;
    background: #fff;
}
.combo select {
    border: 1px solid #707070;
    border-radius: 3px;
    background: linear-gradient(#f2f2f2 0, #ebebeb 48%, #dddddd 50%, #cfcfcf 100%);
}
.combo .caret {
    position: absolute;
    right: 5px;
    top: 10px;
    pointer-events: none;
}
.actions {
    grid-column: 3;
    display: flex;
    gap: 14px;
    padding-left: 1px;
}
.actions > * {
    width: 86px;
    height: 24px;
    border: 1px solid #707070;
    border-radius: 3px;
    box-shadow: inset 0 0 0 1px #fbfbfb;
    background: linear-gradient(#f2f2f2 0, #ebebeb 48%, #dddddd 50%, #cfcfcf 100%);
}
.actions .split {
    display: flex;
    border-color: #2c8fb8;
    box-shadow: inset 0 0 0 1px #58c8ee;
    background: linear-gradient(#eaf4fa 0, #dcebf4 48%, #c6dcea 50%, #c4d8e4 100%);
}
.split button {
    position: relative;
    flex: 1;
    color: #777;
}
.split button + button {
    flex: none;
    width: 14px;
    margin: 2px 0;
    border-left: 1px solid #8aa6b5;
    padding-left: 2px;
    color: #444;
}
.fade {
    position: absolute;
    left: 28px;
    color: #000;
    opacity: 0.5;
}
.grip {
    position: absolute;
    right: 8px;
    bottom: 8px;
    width: 9px;
    height: 9px;
    background: radial-gradient(#b4b4b4 1px, transparent 1px) 0 0 / 3px 3px;
    clip-path: polygon(100% 0, 100% 100%, 0 100%);
}
.cursor {
    position: absolute;
    left: 250px;
    top: 359px;
    width: 18px;
    height: 24px;
    filter: drop-shadow(2px 2px 1px rgba(0,0,0,0.4));
}

/* taskbar */
.taskbar {
    position: absolute;
    left: 0;
    right: 0;
    bottom: 0;
    height: 40px;
    display: flex;
    gap: 3px;
    border-top: 1px solid #2e4a66;
    box-shadow: inset 0 1px rgba(255,255,255,0.6);
    background: linear-gradient(90deg, #8398ae 0, #9fb6d0 60px, #a8c0dc 420px, #a6c0de 800px, #7c93ad 840px, #8098b4 100%);
}
.taskbar button {
    display: flex;
    align-items: center;
    justify-content: center;
}
.start {
    width: 57px;
    padding-right: 2px;
}
.start svg {
    width: 38px;
    height: 38px;
}
.task {
    width: 59px;
    border-radius: 3px;
}
.task svg {
    width: 32px;
    height: 32px;
}
.running {
    border: 1px solid #55697f;
    box-shadow: inset 0 0 0 1px rgba(255,255,255,0.6);
    background: linear-gradient(135deg, #d2deec, #a6b9d2);
}
.active { background: linear-gradient(135deg, #f0f5fb, #c3d1e4); }
.tray {
    display: flex;
    align-items: center;
    gap: 8px;
    margin-left: auto;
    color: #fff;
    text-align: center;
}
.tray .caret { margin-right: 4px; }
.tray time { margin: 0 4px 0 8px; }
.peek {
    width: 14px;
    border: 1px solid #46586c;
    box-shadow: inset 0 0 0 1px rgba(255,255,255,0.3);
    background: linear-gradient(135deg, #a3b3c4, #586c82);
}
```
